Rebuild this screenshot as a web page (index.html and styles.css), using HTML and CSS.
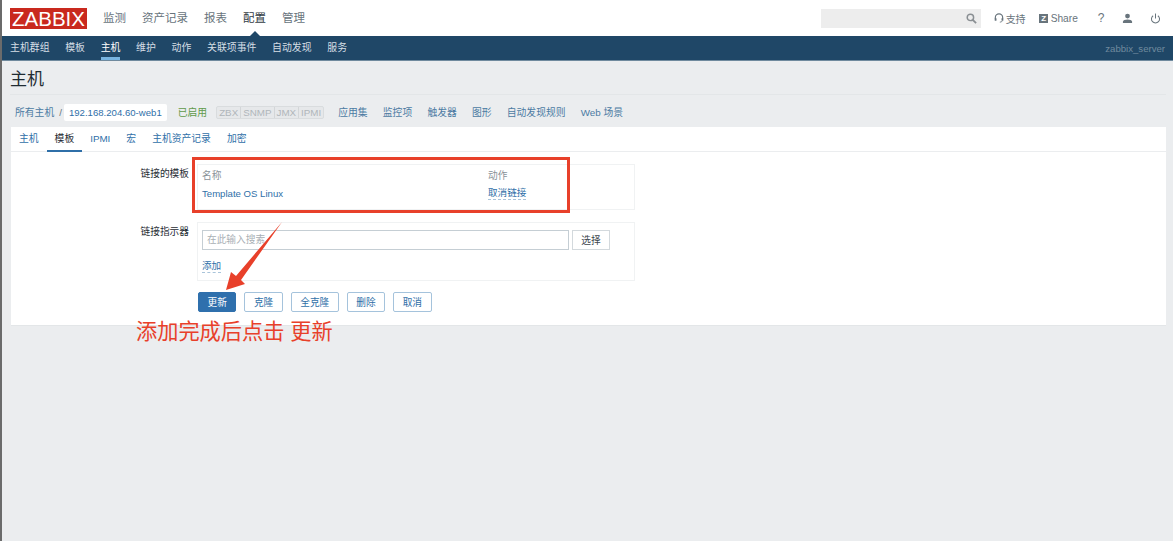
FILE: index.html
```html
<!DOCTYPE html>
<html lang="zh">
<head>
<meta charset="utf-8">
<title>主机</title>
<link rel="stylesheet" href="styles.css">
</head>
<body>
<div class="page">
  <header class="topbar">
    <a class="logo">ZABBIX</a>
    <nav class="mainnav">
      <a>监测</a><a>资产记录</a><a>报表</a><a class="current">配置</a><a>管理</a>
    </nav>
    <div class="tools">
      <div class="search">
        <svg class="search-icon" viewBox="0 0 12 12" width="11" height="11"><circle cx="4.8" cy="4.8" r="3.5" fill="none" stroke="#8a8f93" stroke-width="1.6"/><path d="M7.4 7.4L11 11" stroke="#8a8f93" stroke-width="2"/></svg>
      </div>
      <a class="tool support">
        <svg viewBox="0 0 12 12" width="10" height="10"><path d="M1.6 7V5.5a4.4 4.4 0 0 1 8.8 0V7" fill="none" stroke="#68747c" stroke-width="1.4"/><rect x="0.8" y="6" width="2.2" height="3.4" rx="0.8" fill="#68747c"/><rect x="9" y="6" width="2.2" height="3.4" rx="0.8" fill="#68747c"/><path d="M10 9.4Q9.5 11 7 11" fill="none" stroke="#68747c"/></svg>
        <span>支持</span>
      </a>
      <a class="tool share"><span class="z">Z</span><span>Share</span></a>
      <a class="tool help">?</a>
      <a class="tool user">
        <svg viewBox="0 0 12 12" width="11" height="11"><circle cx="6" cy="3.4" r="2.6" fill="#68747c"/><path d="M1 11V9.6C1 8 3.5 7.2 6 7.2S11 8 11 9.6V11Z" fill="#68747c"/></svg>
      </a>
      <a class="tool power">
        <svg viewBox="0 0 12 12" width="11" height="11"><path d="M3.4 3A4.4 4.4 0 1 0 8.6 3" fill="none" stroke="#68747c" stroke-width="1.1"/><path d="M6 0.6V6" stroke="#68747c" stroke-width="1.1"/></svg>
      </a>
    </div>
  </header>
  <nav class="subnav">
    <div class="sublinks">
      <a>主机群组</a><a>模板</a><a class="selected">主机</a><a>维护</a><a>动作</a><a>关联项事件</a><a>自动发现</a><a>服务</a>
    </div>
    <span class="server">zabbix_server</span>
  </nav>
  <main class="content">
    <h1 class="title">主机</h1>
    <div class="crumbs">
      <a class="crumb">所有主机</a>
      <span class="sep">/</span>
      <a class="crumb-host">192.168.204.60-web1</a>
      <span class="status">已启用</span>
      <span class="badges"><span>ZBX</span><span>SNMP</span><span>JMX</span><span>IPMI</span></span>
      <a class="crumb">应用集</a><a class="crumb">监控项</a><a class="crumb">触发器</a><a class="crumb">图形</a><a class="crumb">自动发现规则</a><a class="crumb">Web 场景</a>
    </div>
    <section class="card">
      <div class="tabs">
        <a>主机</a><a class="active">模板</a><a>IPMI</a><a>宏</a><a>主机资产记录</a><a>加密</a>
      </div>
      <div class="form">
        <div class="row">
          <div class="label">链接的模板</div>
          <div class="box box-templates">
            <div class="col-main">
              <div class="head">名称</div>
              <a class="link">Template OS Linux</a>
            </div>
            <div class="col-action">
              <div class="head">动作</div>
              <a class="link dashed">取消链接</a>
            </div>
          </div>
        </div>
        <div class="row">
          <div class="label">链接指示器</div>
          <div class="box box-indicator">
            <div class="search-row">
              <div class="input">在此输入搜索</div>
              <button class="btn-select">选择</button>
            </div>
            <a class="link dashed add">添加</a>
          </div>
        </div>
        <div class="actions">
          <button class="btn primary">更新</button>
          <button class="btn">克隆</button>
          <button class="btn">全克隆</button>
          <button class="btn">删除</button>
          <button class="btn">取消</button>
        </div>
      </div>
    </section>
  </main>
</div>
<div class="note-box"></div>
<svg class="note-arrow" viewBox="0 0 70 80" width="70" height="80"><path d="M4 68L9 50L14 54L60 0L19 58L23 62Z" fill="#e8402a"/></svg>
<div class="note-text">添加完成后点击 更新</div>
</body>
</html>
```
FILE: styles.css
```css
* { box-sizing: border-box; }
html, body { margin: 0; height: 100%; }
body {
  position: relative;
  overflow: hidden;
  height: 541px;
  background: #ebedef;
  border-left: 2px solid #6b6b6b;
  border-right: 1px solid #fff;
  font-family: "Liberation Sans", "Noto Sans CJK SC", sans-serif;
  font-size: 10px;
  color: #1f2c33;
}
a { text-decoration: none; }
.page { display: flex; flex-direction: column; }

.topbar {
  display: flex;
  align-items: center;
  height: 36px;
  background: #fff;
  padding-left: 8px;
}
.logo {
  display: block;
  width: 77px;
  height: 21px;
  background: #c9291e;
  color: #fff;
  font-size: 20.5px;
  line-height: 22px;
  text-align: center;
}
.mainnav { display: flex; gap: 16px; margin-left: 16px; }
.mainnav a { font-size: 11.5px; color: #68747c; line-height: 16px; }
.mainnav a.current { color: #323c43; position: relative; }
.mainnav a.current::after {
  content: "";
  position: absolute;
  left: 6px;
  bottom: -11px;
  border: 6px solid transparent;
  border-top: 0;
  border-bottom-color: #1f4767;
}
.tools { display: flex; align-items: center; margin-left: auto; padding-right: 12px; }
.search {
  display: flex;
  align-items: center;
  justify-content: flex-end;
  width: 160px;
  height: 19px;
  background: #ededed;
  padding-right: 4px;
  margin-right: 13px;
}
.tool { display: flex; align-items: center; color: #68747c; font-size: 10px; gap: 1.5px; }
.share { margin-left: 13.5px; gap: 2.5px; font-size: 10.2px; }
.z {
  display: block;
  width: 9px;
  height: 9px;
  background: #68747c;
  color: #fff;
  font-size: 8px;
  font-weight: bold;
  line-height: 9px;
  text-align: center;
}
.help { margin-left: 20px; font-size: 12px; }
.user { margin-left: 17.5px; }
.power { margin-left: 17px; }

.subnav {
  display: flex;
  align-items: center;
  justify-content: space-between;
  height: 25px;
  background: #1f4767;
  border-bottom: 1px solid #6f8a9e;
  padding: 0 8px;
}
.sublinks { display: flex; gap: 15.7px; }
.sublinks a { color: #d5dee5; font-size: 9.9px; line-height: 24px; height: 24px; }
.sublinks a.selected { color: #fff; border-bottom: 3px solid #77b4e0; }
.server { color: #6f8a9e; font-size: 9.6px; }

.content { padding: 0 7px 0 8px; }
.title {
  margin: 0;
  height: 34px;
  font-size: 17px;
  font-weight: 400;
  line-height: 37px;
  color: #1f2c33;
  border-bottom: 1px solid #e3e6e8;
}
.crumbs {
  display: flex;
  align-items: center;
  height: 32px;
  padding: 2px 0 0 5px;
  font-size: 9.8px;
}
.crumb { color: #4c7ba3; margin-right: 15.2px; white-space: nowrap; }
.crumbs .crumb:first-child { margin-right: 0; }
.sep { margin: 0 2px 0 5px; color: #68747c; }
.crumb-host {
  display: block;
  background: #fff;
  color: #2f6fa8;
  height: 17px;
  line-height: 17px;
  padding: 0 5px;
  border-radius: 2px;
  font-size: 9.6px;
}
.status { color: #5f9a4a; margin-left: 11px; }
.badges {
  display: flex;
  margin: 0 14px 0 9px;
  border: 1px solid #d9dcde;
  background: #e6e8ea;
  color: #b0b6ba;
  border-radius: 2px;
  height: 13px;
  line-height: 11px;
  font-size: 9.8px;
}
.badges span { padding: 0 2px; border-left: 1px solid #d3d6d8; }
.badges span:first-child { border-left: 0; }

.card {
  height: 199px;
  margin-left: 1px;
  background: #fff;
  border: 1px solid #e3e6e8;
  border-width: 0 0 1px;
}
.tabs {
  display: flex;
  height: 25px;
  border-bottom: 1px solid #ebedef;
}
.tabs a { color: #2f6fa8; font-size: 9.8px; line-height: 24px; height: 25px; padding: 0 8px; }
.tabs a.active { color: #1f2c33; border-bottom: 2px solid #2f6fa8; }

.form { padding-top: 12px; }
.row { display: flex; margin-bottom: 12px; }
.label {
  width: 178px;
  padding-top: 4px;
  text-align: right;
  font-size: 9.7px;
  line-height: 12px;
  color: #1f2c33;
}
.box {
  width: 438px;
  margin-left: 8px;
  border: 1px solid #f0f2f3;
  padding: 4px 4px;
}
.box-templates { display: flex; height: 46px; }
.col-main { width: 286px; }
.head { color: #8a9298; font-size: 9.7px; line-height: 13px; margin-bottom: 5px; }
.link { color: #2f6fa8; font-size: 9.6px; line-height: 13px; display: block; }
.dashed { display: inline-block; border-bottom: 1px dashed #a9c4da; line-height: 12px; }
.box-indicator { height: 59px; padding-top: 7px; }
.search-row { display: flex; gap: 3px; }
.input {
  width: 367px;
  height: 20px;
  border: 1px solid #c5ced4;
  color: #a9b0b5;
  font-size: 9.7px;
  line-height: 18px;
  padding-left: 4px;
}
.btn-select {
  width: 38px;
  height: 20px;
  padding: 0;
  background: #fff;
  border: 1px solid #d3d9dd;
  color: #3b464d;
  font: inherit;
  font-size: 9.7px;
}
.add { margin-top: 10px; }
.actions { display: flex; gap: 8px; padding-left: 187px; margin-top: -1px; }
.btn {
  height: 20px;
  padding: 0 8.5px;
  background: #fff;
  border: 1px solid #a5c3dc;
  border-radius: 2px;
  color: #2f6fa8;
  font: inherit;
  font-size: 9.7px;
}
.btn.primary { background: #2f70ad; border-color: #2f70ad; color: #fff; }

.note-box {
  position: absolute;
  left: 190px;
  top: 157px;
  width: 378px;
  height: 56px;
  border: 3px solid #e8402a;
}
.note-arrow { position: absolute; left: 220px; top: 222px; }
.note-text {
  position: absolute;
  left: 134px;
  top: 317px;
  font-size: 21.2px;
  line-height: 30px;
  color: #e8402a;
  white-space: nowrap;
}
```
